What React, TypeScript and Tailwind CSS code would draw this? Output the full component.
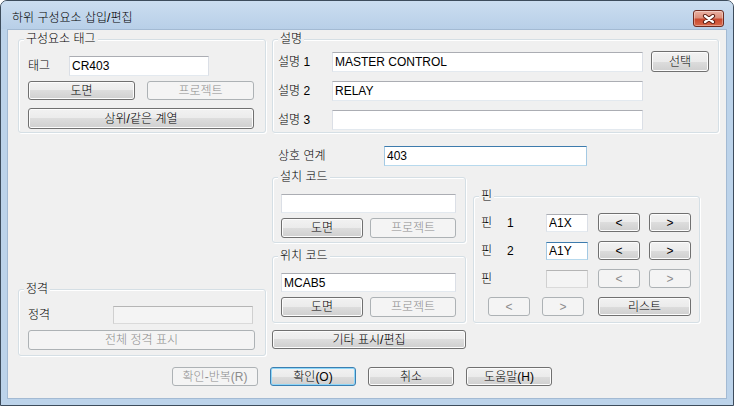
import React from "react";

// Hangul runs get the light weight; digits and latin stay regular
function Ko({ children }: { children: React.ReactNode }) {
  if (typeof children !== "string") return <>{children}</>;
  const parts = children.split(/([\uac00-\ud7a3]+)/);
  return (
    <>
      {parts.map((p, i) =>
        /[\uac00-\ud7a3]/.test(p) ? (
          <span key={i} className="font-light">
            {p}
          </span>
        ) : (
          p
        )
      )}
    </>
  );
}

const btnNormal =
  "border-[#707070] bg-[linear-gradient(#f2f2f2_0%,#ebebeb_50%,#dddddd_50%,#cfcfcf_100%)] shadow-[inset_0_0_0_1px_#fcfcfc] text-black";
const btnDisabled = "border-[#adb2b5] bg-[#f4f4f4] text-[#8c8c8c]";
const btnDefault =
  "border-[#3c7fb1] bg-[linear-gradient(#f2f2f2_0%,#ebebeb_50%,#dddddd_50%,#cfcfcf_100%)] shadow-[inset_0_0_0_1px_#8ed6f8] text-black";

function Btn({
  className,
  disabled,
  primary,
  children,
}: {
  className: string;
  disabled?: boolean;
  primary?: boolean;
  children: React.ReactNode;
}) {
  const look = disabled ? btnDisabled : primary ? btnDefault : btnNormal;
  return (
    <button
      type="button"
      disabled={disabled}
      className={`flex shrink-0 items-center justify-center rounded-[3px] border text-[12px] leading-[14px] ${look} ${className}`}
    >
      <span className="whitespace-pre">
        <Ko>{children}</Ko>
      </span>
    </button>
  );
}

// Win7 text box: darker top edge, pale sides
function Field({
  className,
  value = "",
  disabled,
  hot,
}: {
  className: string;
  value?: string;
  disabled?: boolean;
  hot?: boolean;
}) {
  const look = disabled
    ? "bg-[#f4f4f4] border-t-[#b5b5b5] border-x-[#d0d0d0] border-b-[#dadada]"
    : hot
    ? "bg-white border-t-[#3d7bad] border-x-[#a4c9e3] border-b-[#b7d9ed]"
    : "bg-white border-t-[#abadb3] border-x-[#dbdfe6] border-b-[#e3e9ef]";
  return (
    <input
      readOnly
      disabled={disabled}
      defaultValue={value}
      className={`shrink-0 border px-[2px] text-[12px] leading-[14px] text-black outline-none ${look} ${className}`}
    />
  );
}

function Group({
  label,
  className,
  children,
}: {
  label: string;
  className: string;
  children?: React.ReactNode;
}) {
  return (
    <div
      className={`relative shrink-0 rounded-[3px] border border-[#d5dfe5] shadow-[inset_1px_1px_0_#ffffff,1px_1px_0_#ffffff] ${className}`}
    >
      <span className="absolute -top-[8px] left-[5px] whitespace-pre bg-[#f0f0f0] px-[2px] leading-[14px]">
        <Ko>{label}</Ko>
      </span>
      {children}
    </div>
  );
}

function PinRow({ n, value, hot, off }: { n?: string; value?: string; hot?: boolean; off?: boolean }) {
  return (
    <div className="flex h-[19px] items-center">
      <div className="flex w-[65px] items-center leading-[14px]">
        <span className="font-light">핀</span>
        {n && <span className="ml-[15px]">{n}</span>}
      </div>
      <Field className="h-[18px] w-[42px]" value={value} hot={hot} disabled={off} />
      <Btn className="ml-[10px] h-[19px] w-[42px]" disabled={off}>
        &lt;
      </Btn>
      <Btn className="ml-[9px] h-[19px] w-[42px]" disabled={off}>
        &gt;
      </Btn>
    </div>
  );
}

function CodeGroup({ label, value, className }: { label: string; value: string; className: string }) {
  return (
    <Group label={label} className={`w-[194px] pl-[8px] pt-[16px] ${className}`}>
      <Field className="h-[19px] w-[175px]" value={value} />
      <div className="mt-[5px] flex gap-[7px]">
        <Btn className="h-[20px] w-[82px]">도면</Btn>
        <Btn className="h-[20px] w-[86px]" disabled>
          프로젝트
        </Btn>
      </div>
    </Group>
  );
}

function Label({ className, text }: { className: string; text: string }) {
  return (
    <span className={`whitespace-pre leading-[14px] ${className}`}>
      <Ko>{text}</Ko>
    </span>
  );
}

export default function App() {
  return (
    <div className="h-[406px] w-[734px] bg-white font-['Liberation_Sans','Noto_Sans_CJK_KR',sans-serif] text-[12px] text-black">
      <div className="flex h-[406px] w-[734px] flex-col rounded-t-[7px] border border-[#3d4c5c] bg-[#bcd3ea]">
        {/* Title bar */}
        <div className="flex h-[28px] shrink-0 items-start justify-between rounded-t-[6px] bg-[linear-gradient(#cbddf0,#b8cfe8)]">
          <Label className="ml-[11px] mt-[10px]" text="하위 구성요소 삽입/편집" />
          <div className="mr-[9px] mt-[9px] flex h-[17px] w-[31px] items-center justify-center rounded-[3px] border border-[#6e2b20] bg-[linear-gradient(#eab1a3_0%,#dc8f7b_45%,#c9492f_55%,#d9694a_100%)] shadow-[inset_0_0_0_1px_rgba(255,255,255,0.35)]">
            <svg width="14" height="10" viewBox="0 0 14 10">
              <path d="M3 2 L11 8 M11 2 L3 8" stroke="#5a1d12" strokeWidth="4.2" strokeLinecap="round" />
              <path d="M3 2 L11 8 M11 2 L3 8" stroke="#ffffff" strokeWidth="2.2" strokeLinecap="round" />
            </svg>
          </div>
        </div>

        {/* Client area */}
        <div className="mx-[6px] h-[370px] border border-[#a3bad3] bg-[#f0f0f0] pl-[10px] pt-[9px]">
          {/* Top row */}
          <div className="flex items-start gap-[6px]">
            <Group label="구성요소 태그" className="h-[94px] w-[248px] pl-[9px] pt-[16px]">
              <div className="flex h-[20px] items-center">
                <Label className="w-[41px]" text="태그" />
                <Field className="h-[20px] w-[140px]" value="CR403" />
              </div>
              <div className="mt-[5px] flex gap-[12px]">
                <Btn className="h-[19px] w-[107px]">도면</Btn>
                <Btn className="h-[19px] w-[107px]" disabled>
                  프로젝트
                </Btn>
              </div>
              <Btn className="mt-[8px] h-[21px] w-[226px]">상위/같은 계열</Btn>
            </Group>

            <Group label="설명" className="flex h-[94px] w-[447px] flex-col gap-[9px] pl-[5px] pt-[12px]">
              <div className="flex items-start">
                <Label className="w-[54px] self-center" text="설명 1" />
                <Field className="h-[20px] w-[311px]" value="MASTER CONTROL" />
                <Btn className="-mt-[1px] ml-[8px] h-[21px] w-[58px]">선택</Btn>
              </div>
              <div className="flex items-center">
                <Label className="w-[54px]" text="설명 2" />
                <Field className="h-[20px] w-[311px]" value="RELAY" />
              </div>
              <div className="flex items-center">
                <Label className="w-[54px]" text="설명 3" />
                <Field className="h-[20px] w-[311px]" />
              </div>
            </Group>
          </div>

          {/* Middle section */}
          <div className="flex items-start gap-[6px]">
            <div className="w-[248px] shrink-0">
              <Group label="정격" className="mt-[156px] h-[67px] w-[248px] pl-[9px] pt-[16px]">
                <div className="flex h-[18px] items-center">
                  <Label className="w-[85px]" text="정격" />
                  <Field className="h-[18px] w-[140px]" disabled />
                </div>
                <Btn className="mt-[6px] h-[20px] w-[227px]" disabled>
                  전체 정격 표시
                </Btn>
              </Group>
            </div>

            <div className="flex flex-col">
              <div className="mt-[13px] flex h-[20px] items-center">
                <Label className="ml-[6px] w-[106px]" text="상호 연계" />
                <Field className="h-[20px] w-[203px]" value="403" hot />
              </div>
              <div className="mt-[11px] flex items-start gap-[7px]">
                <div className="flex w-[194px] flex-col">
                  <CodeGroup label="설치 코드" value="" className="h-[66px]" />
                  <CodeGroup label="위치 코드" value="MCAB5" className="mt-[13px] h-[67px]" />
                  <Btn className="mt-[7px] h-[19px] w-[194px]">기타 표시/편집</Btn>
                </div>

                <Group label="핀" className="mt-[19px] flex h-[127px] w-[227px] flex-col gap-[9px] pl-[7px] pt-[16px]">
                  <PinRow n="1" value="A1X" />
                  <PinRow n="2" value="A1Y" hot />
                  <PinRow off />
                  <div className="flex h-[19px] items-center">
                    <Btn className="ml-[7px] h-[19px] w-[42px]" disabled>
                      &lt;
                    </Btn>
                    <Btn className="ml-[12px] h-[19px] w-[42px]" disabled>
                      &gt;
                    </Btn>
                    <Btn className="ml-[14px] h-[19px] w-[93px]">리스트</Btn>
                  </div>
                </Group>
              </div>
            </div>
          </div>

          {/* Bottom buttons */}
          <div className="ml-[154px] mt-[11px] flex gap-[12px]">
            <Btn className="h-[19px] w-[86px]" disabled>
              확인-반복(R)
            </Btn>
            <Btn className="h-[19px] w-[86px]" primary>
              확인(O)
            </Btn>
            <Btn className="h-[19px] w-[86px]">취소</Btn>
            <Btn className="h-[19px] w-[86px]">도움말(H)</Btn>
          </div>
        </div>
      </div>
    </div>
  );
}
